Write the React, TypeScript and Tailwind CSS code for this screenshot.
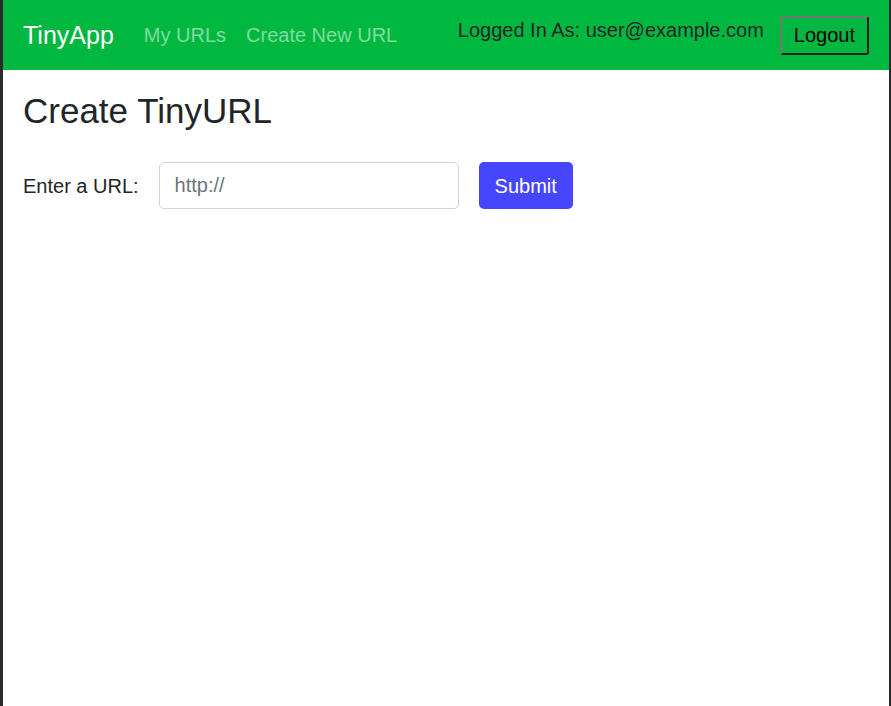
const App = () => {
  return (
    <div
      className="h-screen bg-white border-l-[3px] border-r-2 border-[#2b2b2b] text-[#212529]"
      style={{ fontFamily: '"Liberation Sans", Arial, sans-serif' }}
    >
      <nav className="flex items-center justify-between h-[70px] px-5 bg-[#00b83f]">
        <div className="flex items-center">
          <a className="text-[25px] text-white mr-5 leading-[30px]" href="#">
            TinyApp
          </a>
          <a className="text-[20px] text-white/50 px-[10px] leading-[30px]" href="#">
            My URLs
          </a>
          <a className="text-[20px] text-white/50 px-[10px] leading-[30px]" href="#">
            Create New URL
          </a>
        </div>
        <div className="flex items-center gap-4">
          <span className="text-[20px] text-[#212529] mb-[10px]">
            Logged In As: user@example.com
          </span>
          <button className="text-[20px] text-black leading-[23px] px-3 py-[6px] rounded-[3px] border-2 border-t-[#767676] border-l-[#767676] border-r-[#1f1f1f] border-b-[#1f1f1f]">
            Logout
          </button>
        </div>
      </nav>
      <main className="px-5 pt-5">
        <h3 className="text-[35px] leading-[42px] font-normal mb-[30px]">
          Create TinyURL
        </h3>
        <form className="flex items-center gap-5" onSubmit={(e) => e.preventDefault()}>
          <label className="text-[20px]">Enter a URL:</label>
          <input
            type="text"
            placeholder="http://"
            className="w-[300px] h-[47px] px-[15px] text-[20px] border border-[#ced4da] rounded-[5px] placeholder:text-[#6c757d] outline-none"
          />
          <button className="h-[47px] px-4 text-[20px] text-white bg-[#4646ff] rounded-[5px]">
            Submit
          </button>
        </form>
      </main>
    </div>
  )
}

export default App
